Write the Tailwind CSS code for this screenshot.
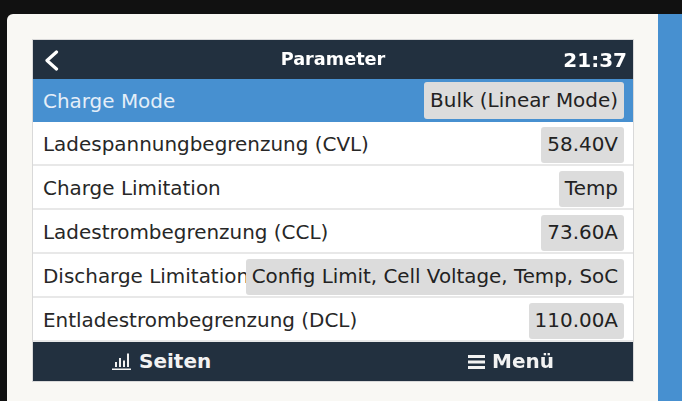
<!DOCTYPE html>
<html lang="en">
<head>
  <meta charset="UTF-8" />
  <title>Parameter</title>
  <script src="https://cdn.jsdelivr.net/npm/@tailwindcss/browser@4"></script>
</head>
<body class="bg-[#111111] h-[401px] w-[682px] overflow-hidden font-['DejaVu_Sans',sans-serif]">
  <div class="pt-[14px] pl-[7px] flex h-[401px]">
    <div class="w-[651px] bg-[#f9f8f4] rounded-tl-[6px] pt-[26px] pl-[26px]">
      <div class="w-[600px] h-[341px] outline outline-[#d9d9d9] flex flex-col blur-[0.35px]">
        <header class="h-[39px] bg-[#22303f] text-white flex items-center justify-between relative pl-[11px] pr-[6px]">
          <svg width="16" height="22" viewBox="0 0 16 22" fill="none" stroke="#ffffff" stroke-width="3.2" stroke-linecap="round" stroke-linejoin="round"><path d="M12.5 3 L3 11.5 L12.5 20"/></svg>
          <span class="absolute left-0 right-0 text-center text-[17.7px] font-bold">Parameter</span>
          <span class="text-[20px] font-bold">21:37</span>
        </header>
        <div class="h-[43px] bg-[#4790d0] flex items-center justify-between pl-[10px] pr-[9px]">
          <span class="pt-[2px] text-[19.95px] text-[#e4eef8]">Charge Mode</span>
          <span class="h-[37px] px-[6px] flex items-center rounded-[3px] bg-[#dcdcdc] text-[#222] text-[19.95px]">Bulk (Linear Mode)</span>
        </div>
        <div class="h-[44px] bg-white pt-[4px] border-b-2 border-[#e8e8e8] flex items-center justify-between pl-[10px] pr-[9px]">
          <span class="text-[19.95px] text-[#272727]">Ladespannungbegrenzung (CVL)</span>
          <span class="h-[36px] px-[6px] flex items-center rounded-[3px] bg-[#dcdcdc] text-[#222] text-[19.95px]">58.40V</span>
        </div>
        <div class="h-[44px] bg-white pt-[4px] border-b-2 border-[#e8e8e8] flex items-center justify-between pl-[10px] pr-[9px]">
          <span class="text-[19.95px] text-[#272727]">Charge Limitation</span>
          <span class="h-[36px] px-[6px] flex items-center rounded-[3px] bg-[#dcdcdc] text-[#222] text-[19.95px]">Temp</span>
        </div>
        <div class="h-[44px] bg-white pt-[4px] border-b-2 border-[#e8e8e8] flex items-center justify-between pl-[10px] pr-[9px]">
          <span class="text-[19.95px] text-[#272727]">Ladestrombegrenzung (CCL)</span>
          <span class="h-[36px] px-[6px] flex items-center rounded-[3px] bg-[#dcdcdc] text-[#222] text-[19.95px]">73.60A</span>
        </div>
        <div class="h-[44px] bg-white pt-[4px] border-b-2 border-[#e8e8e8] flex items-center justify-between pl-[10px] pr-[9px]">
          <span class="w-0 flex-1 text-[19.95px] text-[#272727] whitespace-nowrap">Discharge Limitation</span>
          <span class="relative shrink-0 h-[36px] px-[6px] flex items-center rounded-[3px] bg-[#dcdcdc] text-[#222] text-[19.85px] whitespace-nowrap">Config Limit, Cell Voltage, Temp, SoC</span>
        </div>
        <div class="h-[44px] bg-white pt-[4px] border-b-2 border-[#e8e8e8] flex items-center justify-between pl-[10px] pr-[9px]">
          <span class="text-[19.95px] text-[#272727]">Entladestrombegrenzung (DCL)</span>
          <span class="h-[36px] px-[6px] flex items-center rounded-[3px] bg-[#dcdcdc] text-[#222] text-[19.95px]">110.00A</span>
        </div>
        <footer class="h-[39px] bg-[#22303f] text-[#f2f2f2] flex justify-between px-[79px] text-[20px] font-bold">
          <div class="flex items-center gap-[8px]">
            <svg width="19" height="18" viewBox="0 0 19 18" fill="#f2f2f2"><rect x="0" y="15.5" width="19" height="1.5"/><rect x="3" y="9" width="2" height="5"/><rect x="7" y="5" width="2" height="9"/><rect x="11" y="7.5" width="2" height="6.5"/><rect x="15" y="0.5" width="2" height="13.5"/></svg>
            <span class="pb-[2px]">Seiten</span>
          </div>
          <div class="flex items-center gap-[7px]">
            <svg width="17" height="16" viewBox="0 0 17 16" fill="#f2f2f2"><rect x="0" y="1" width="17" height="3"/><rect x="0" y="6.5" width="17" height="3"/><rect x="0" y="12" width="17" height="3"/></svg>
            <span class="pb-[2px]">Menü</span>
          </div>
        </footer>
      </div>
    </div>
    <div class="flex-1 bg-[#4790d0]"></div>
  </div>
</body>
</html>
